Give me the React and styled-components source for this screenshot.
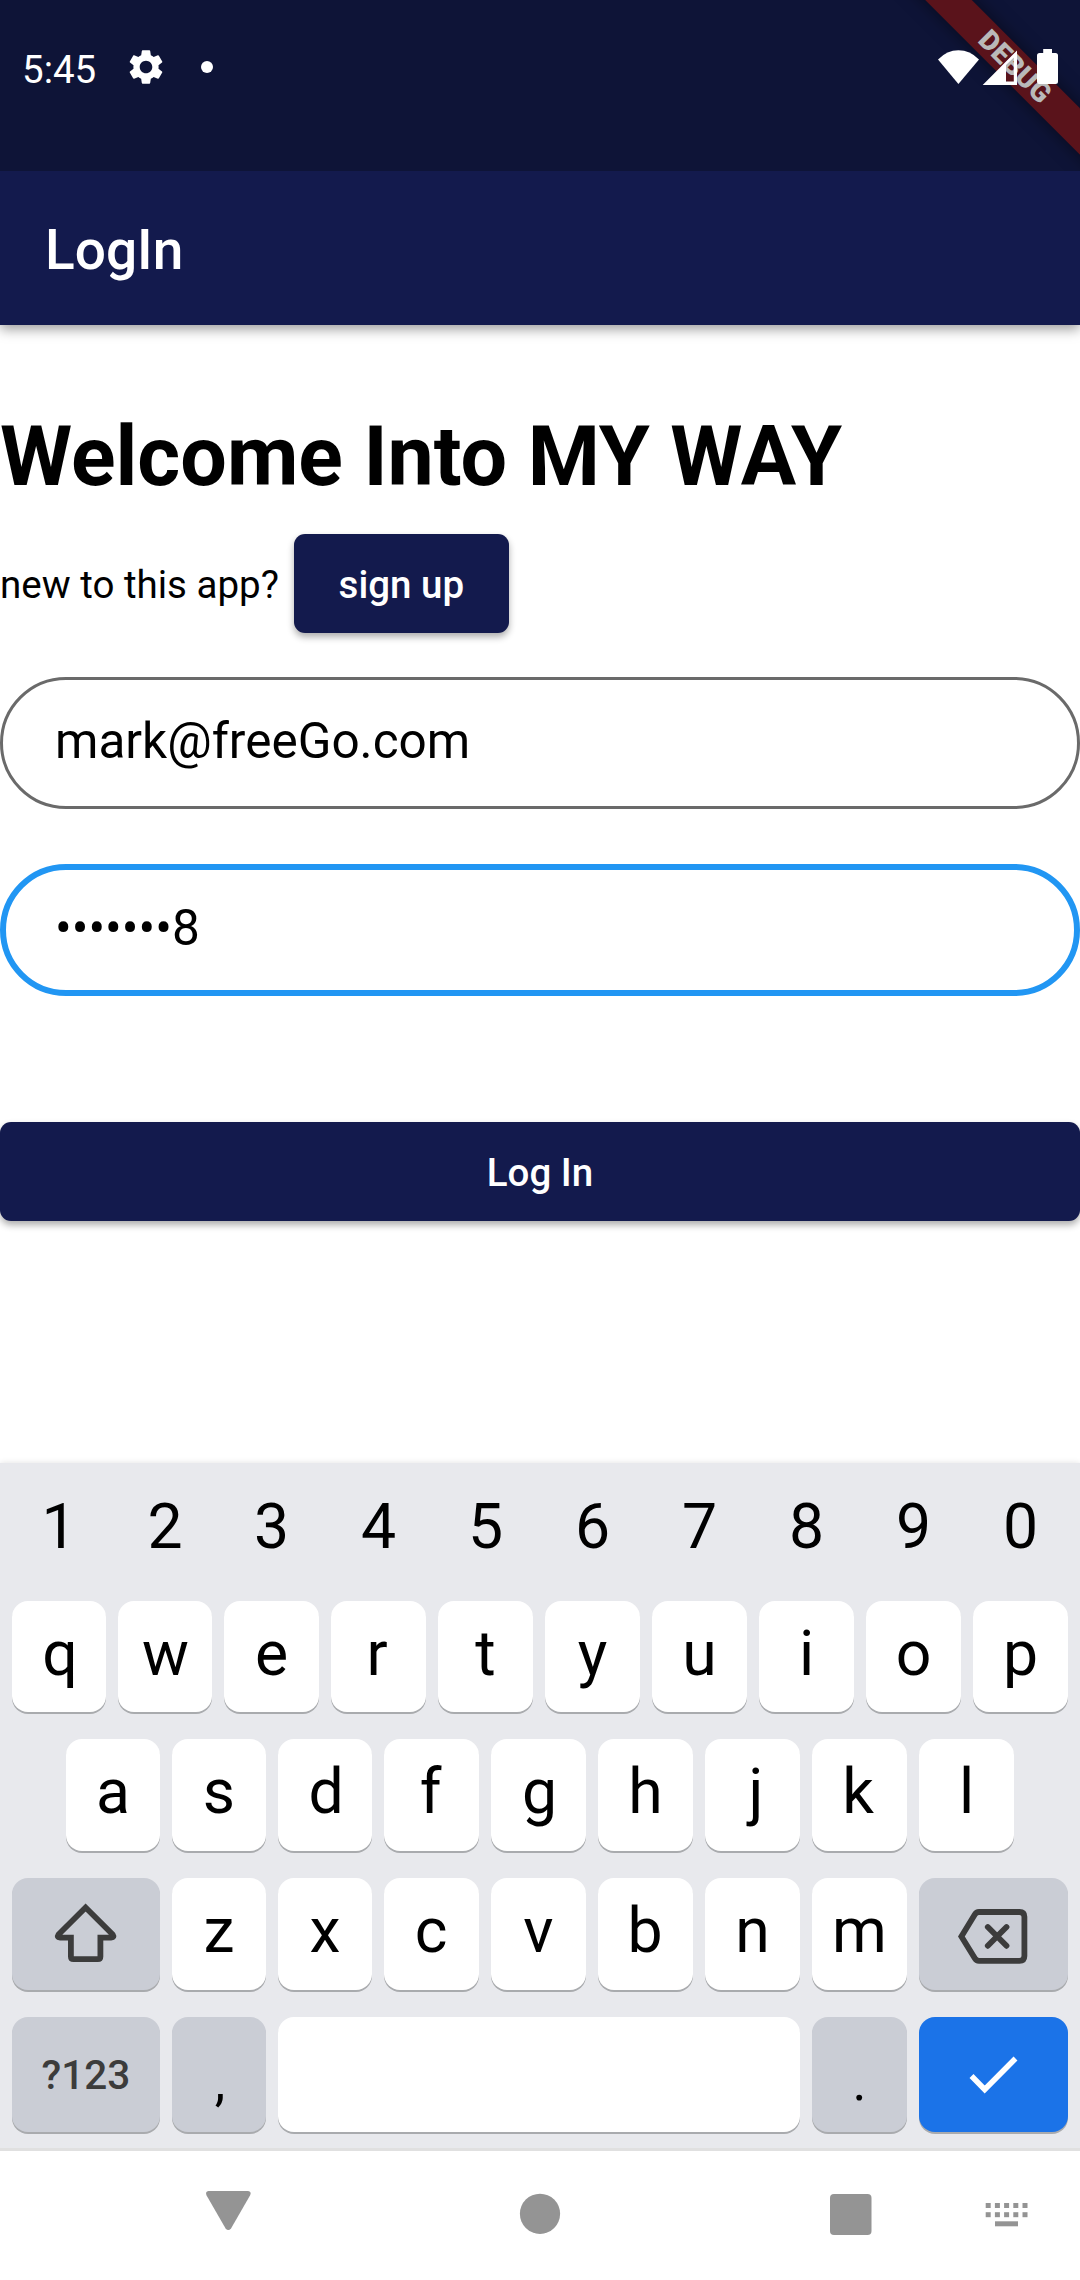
import React from "react";
import styled, { createGlobalStyle, css } from "styled-components";
import { MdSettings } from "react-icons/md";

const GlobalStyle = createGlobalStyle`
  * { box-sizing: border-box; }
  body { margin: 0; background: #fff; }
  button, input { font-family: inherit; border: 0; margin: 0; padding: 0; }
`;

const Screen = styled.div`
  position: relative;
  width: 1080px;
  height: 2280px;
  overflow: hidden;
  display: flex;
  flex-direction: column;
  background: #fff;
  color: #000;
  font-family: Roboto, "Liberation Sans", sans-serif;
`;

const StatusBar = styled.header`
  position: relative;
  z-index: 2;
  overflow: hidden;
  flex: none;
  height: 171px;
  background: #0e1437;
  color: #fff;
`;

const StatusContent = styled.div`
  position: relative;
  display: flex;
  align-items: center;
  height: 134px;
  padding: 0 22px 0 22px;
`;

const Clock = styled.span`
  font-size: 38.5px;
  line-height: 46px;
  margin-top: 5px;
  width: 103px;
`;

const Gear = styled(MdSettings)`
  width: 42px;
  height: 42px;
`;

const Dot = styled.span`
  width: 12px;
  height: 12px;
  margin-left: 34px;
  border-radius: 50%;
  background: #fff;
`;

const SystemIcons = styled.svg`
  display: block;
  margin-left: auto;
`;

const Ribbon = styled.div`
  position: absolute;
  left: 864px;
  top: 49px;
  width: 300px;
  height: 33px;
  transform: rotate(45deg);
  background: #5a131b;
  box-shadow: 0 0 17px rgba(0, 0, 0, 0.5);
  color: #b9b9b9;
  font-size: 28px;
  font-weight: 900;
  line-height: 33px;
  text-align: center;
  text-indent: 3px;
`;

const AppBar = styled.div`
  position: relative;
  z-index: 1;
  flex: none;
  display: flex;
  align-items: center;
  height: 154px;
  padding: 4px 0 0 45px;
  background: #131a4d;
  color: #fff;
  font-size: 55px;
  font-weight: 500;
  box-shadow: 0 4px 12px rgba(0, 0, 0, 0.4);
`;

const Form = styled.main`
  flex: none;
  display: flex;
  flex-direction: column;
  height: 1138px;
  padding-top: 82px;
`;

const Heading = styled.h1`
  margin: 0;
  height: 97px;
  font-size: 82.5px;
  line-height: 99px;
  font-weight: 700;
  white-space: nowrap;
`;

const SignUpRow = styled.div`
  display: flex;
  align-items: center;
  gap: 15px;
  margin-top: 30px;
  font-size: 38.5px;
`;

const Prompt = styled.span`
  padding-top: 2px;
`;

const Button = styled.button`
  height: 99px;
  width: ${(p) => p.$width};
  padding-top: 2px;
  border-radius: 11px;
  background: #131a4d;
  color: #fff;
  font-size: 38.5px;
  font-weight: 500;
  box-shadow: 0 4px 7px rgba(0, 0, 0, 0.32);
`;

const Field = styled.input`
  width: 100%;
  height: 132px;
  margin-top: ${(p) => p.$gap}px;
  padding: 0 0 4px ${(p) => (p.$focused ? 49 : 52)}px;
  border: ${(p) => (p.$focused ? "6px solid #2196f3" : "3px solid #6a6a6a")};
  border-radius: 66px;
  background: transparent;
  color: #000;
  font-size: 49.5px;
  outline: none;
`;

const Submit = styled(Button)`
  margin-top: 126px;
`;

const Keyboard = styled.section`
  flex: none;
  height: 688px;
  padding: 0 12px;
  background: #e8e9ed;
  border-bottom: 3px solid #e0e0e0;
  box-shadow: 0 0 6px rgba(0, 0, 0, 0.12);
`;

const KeyRow = styled.div`
  display: grid;
  grid-template-columns: ${(p) => p.$columns};
  grid-template-rows: 100%;
  gap: 12px;
  height: ${(p) => p.$height || 112}px;
  margin-bottom: 27px;
  padding: 0 ${(p) => p.$inset || 0}px;
`;

const keyTones = {
  plain: css`background: transparent;`,
  light: css`background: #fff; box-shadow: 0 2px 0 #a9abae;`,
  grey: css`background: #cacdd5; box-shadow: 0 2px 0 #a9abae;`,
  blue: css`background: #1b73e8; box-shadow: 0 2px 0 #a9abae;`,
};

const Key = styled.button`
  min-width: 0;
  display: flex;
  align-items: flex-start;
  justify-content: center;
  height: 100%;
  padding-left: ${(p) => Math.max(0, (p.$nudge || 0) * 2)}px;
  padding-right: ${(p) => Math.max(0, (p.$nudge || 0) * -2)}px;
  border-radius: 16px;
  color: #000;
  font-size: 62.5px;
  line-height: ${(p) => p.$line || 106}px;
  ${(p) => keyTones[p.$tone || "light"]}
`;

const PunctuationKey = styled(Key)`
  font-size: 53px;
  line-height: 130px;
`;

const ModeKey = styled(Key)`
  color: #3c3c3c;
  font-size: 40.5px;
  font-weight: 500;
  line-height: 117px;
`;

const IconKey = styled(Key)`
  align-items: center;
`;

const NavBar = styled.nav`
  flex: 1;
  background: #fff;
`;

const NavIcons = styled.svg`
  display: block;
  fill: #949494;
`;

function StatusIcons() {
  return (
    <SystemIcons width="122" height="40" viewBox="936 47 122 40" fill="#fff">
      <path d="M958.400 84 L938 59.500 Q947 50.300 958.400 50.300 Q970 50.300 979 59.500 Z" />
      <path
        fillRule="evenodd"
        d="M982.700 85 L1017 50.500 V85 Z M1006 65 V81.500 H1013.800 V57.500 Z"
      />
      <path d="M1043.200 49 H1052 V53 H1055.500 Q1058 53 1058 55.500 V81.500 Q1058 84 1055.500 84 H1039.500 Q1037 84 1037 81.500 V55.500 Q1037 53 1039.500 53 H1043.200 Z" />
    </SystemIcons>
  );
}

function ShiftIcon() {
  return (
    <svg width="148" height="112" viewBox="12 1878 148 112" fill="none" stroke="#3c3c3c" strokeWidth="5.8">
      <path d="M85.600 1907.500 L58.500 1934.500 Q56.500 1937.600 60 1937.600 H70.900 V1956.500 Q70.900 1959.200 73.500 1959.200 H97.800 Q100.400 1959.200 100.400 1956.500 V1937.600 H111.200 Q114.700 1937.600 112.700 1934.500 Z" />
    </svg>
  );
}

function BackspaceIcon() {
  return (
    <svg width="149" height="112" viewBox="919 1878 149 112" fill="none" stroke="#3c3c3c" strokeWidth="5.800">
      <path d="M961.400 1936.400 L974.800 1914.500 Q976.300 1912 979 1912 H1019.500 Q1024.400 1912 1024.400 1916.800 V1956 Q1024.400 1960.800 1019.500 1960.800 H979 Q976.300 1960.800 974.800 1958.300 Z" />
      <path strokeLinecap="round" d="M987.800 1927 L1006.500 1945.800 M1006.500 1927 L987.800 1945.800" />
    </svg>
  );
}

function CheckIcon() {
  return (
    <svg width="149" height="115" viewBox="919 2017 149 115" fill="none" stroke="#fff" strokeWidth="5.500">
      <path d="M971.500 2076 L984.700 2089.500 L1015.500 2058.500" />
    </svg>
  );
}

const keyboardDots = [0, 1, 2, 3, 4].flatMap((col) => [0, 1].map((row) => [col, row]));

function Navigation() {
  return (
    <NavIcons width="1080" height="129" viewBox="0 2151 1080 129">
      <path d="M208.500 2191 H248 Q252 2191.500 250 2195.500 L231 2228.500 Q228.300 2231.500 225.600 2228.500 L206.600 2195.500 Q204.800 2191.500 208.500 2191 Z" />
      <circle cx="540" cy="2213.800" r="20.100" />
      <rect x="830" y="2194" width="41.500" height="41" rx="4" />
      {keyboardDots.map(([col, row]) => (
        <rect key={`${col}-${row}`} x={985.700 + col * 9.200} y={2203 + row * 9.200} width="5" height="5" />
      ))}
      <rect x="995" y="2221.300" width="23" height="5" />
    </NavIcons>
  );
}

const tenKeys = "repeat(2, 94px) repeat(8, 95px)";

const opticalNudge = { q: 1, w: 0.5, d: 1, g: 1, j: 3.5, r: -1.5, k: -1.5, f: -1, c: -0.5, b: -0.5 };

function LetterKeys({ letters }) {
  return [...letters].map((k) => (
    <Key key={k} $nudge={opticalNudge[k]}>{k}</Key>
  ));
}

export default function App() {
  return (
    <>
      <GlobalStyle />
      <Screen>
        <StatusBar>
          <Ribbon>DEBUG</Ribbon>
          <StatusContent>
            <Clock>5:45</Clock>
            <Gear />
            <Dot />
            <StatusIcons />
          </StatusContent>
        </StatusBar>
        <AppBar>LogIn</AppBar>
        <Form>
          <Heading>Welcome Into MY WAY</Heading>
          <SignUpRow>
            <Prompt>new to this app?</Prompt>
            <Button $width="215px">sign up</Button>
          </SignUpRow>
          <Field $gap={44} defaultValue="mark@freeGo.com" />
          <Field $gap={55} $focused defaultValue="•••••••8" />
          <Submit $width="100%">Log In</Submit>
        </Form>
        <Keyboard>
          <KeyRow $height={111} $columns={tenKeys}>
            {[..."1234567890"].map((k) => (
              <Key key={k} $tone="plain" $line={128}>{k}</Key>
            ))}
          </KeyRow>
          <KeyRow $height={111} $columns={tenKeys}>
            <LetterKeys letters="qwertyuiop" />
          </KeyRow>
          <KeyRow $inset={54} $columns="repeat(3, 94px) repeat(6, 95px)">
            <LetterKeys letters="asdfghjkl" />
          </KeyRow>
          <KeyRow $columns="148px repeat(2, 94px) repeat(5, 95px) 149px">
            <IconKey $tone="grey"><ShiftIcon /></IconKey>
            <LetterKeys letters="zxcvbnm" />
            <IconKey $tone="grey"><BackspaceIcon /></IconKey>
          </KeyRow>
          <KeyRow $height={115} $columns="148px 94px 1fr 95px 149px">
            <ModeKey $tone="grey">?123</ModeKey>
            <PunctuationKey $tone="grey" $nudge={1}>,</PunctuationKey>
            <Key aria-label="space" />
            <PunctuationKey $tone="grey">.</PunctuationKey>
            <IconKey $tone="blue"><CheckIcon /></IconKey>
          </KeyRow>
        </Keyboard>
        <NavBar>
          <Navigation />
        </NavBar>
      </Screen>
    </>
  );
}
